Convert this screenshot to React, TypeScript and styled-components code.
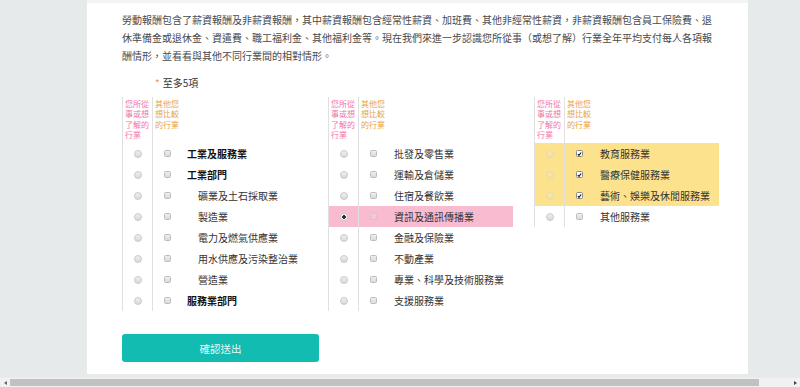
import React from 'react'
import styled, { createGlobalStyle, css } from 'styled-components'

const GlobalStyle = createGlobalStyle`
  html, body {
    margin: 0;
    padding: 0;
    overflow: hidden;
  }
  body {
    font-family: "Noto Sans CJK TC", "Noto Sans", sans-serif;
  }
`

type Item = {
  label: string,
  level?: 'bold' | 'indent' | 'plain',
  tone?: 'pink' | 'yellow',
  radio?: boolean,
  check?: boolean,
}

const groups: Item[][] = [
  [
    { label: '工業及服務業', level: 'bold' },
    { label: '工業部門', level: 'bold' },
    { label: '礦業及土石採取業', level: 'indent' },
    { label: '製造業', level: 'indent' },
    { label: '電力及燃氣供應業', level: 'indent' },
    { label: '用水供應及污染整治業', level: 'indent' },
    { label: '營造業', level: 'indent' },
    { label: '服務業部門', level: 'bold' },
  ],
  [
    { label: '批發及零售業' },
    { label: '運輸及倉儲業' },
    { label: '住宿及餐飲業' },
    { label: '資訊及通訊傳播業', tone: 'pink', radio: true },
    { label: '金融及保險業' },
    { label: '不動產業' },
    { label: '專業、科學及技術服務業' },
    { label: '支援服務業' },
  ],
  [
    { label: '教育服務業', tone: 'yellow', check: true },
    { label: '醫療保健服務業', tone: 'yellow', check: true },
    { label: '藝術、娛樂及休閒服務業', tone: 'yellow', check: true },
    { label: '其他服務業' },
  ],
]

const Page = styled.div`
  height: 100vh;
  display: flex;
  flex-direction: column;
  background: #e7eaeb;
`

const Main = styled.div`
  flex: 1;
  display: flex;
  padding-left: 87px;
  overflow: hidden;
`

const Panel = styled.div`
  width: 661px;
  box-sizing: border-box;
  margin-bottom: 3px;
  background: #fff;
  border-top: 3px solid #f2f3f3;
  padding: 8px 30px 0 35px;
`

const Intro = styled.p`
  margin: 0;
  font-size: 10px;
  line-height: 18px;
  color: #4a4a4a;
  white-space: nowrap;
`

const Note = styled.div`
  margin: 9px 0 5px 33px;
  font-size: 10px;
  line-height: 18px;
  color: #333;

  & span {
    color: #f0963c;
    margin-right: 3px;
  }
`

const Groups = styled.div`
  display: grid;
  grid-template-columns: repeat(3, 185px);
  column-gap: 21px;
  align-items: start;
`

const Row = styled.div<{ $tone?: 'pink' | 'yellow' }>`
  display: grid;
  grid-template-columns: 30px 30px 1fr;
  height: 21px;
  background: ${({ $tone }) =>
    $tone === 'pink' ? '#f8bbd0' : $tone === 'yellow' ? '#fde28d' : 'transparent'};
`

const HeadRow = styled(Row)`
  height: 46px;
`

const Cell = styled.div`
  border-left: 1px solid #e0e0e0;
  display: flex;
  align-items: center;
  justify-content: center;
`

const HeadCell = styled.div<{ $color: string }>`
  border-left: 1px solid #e0e0e0;
  padding: 2px 0 0 2px;
  font-size: 8px;
  line-height: 10.4px;
  color: ${({ $color }) => $color};

  & span {
    display: block;
    white-space: nowrap;
  }
`

const Label = styled.div<{ $level?: 'bold' | 'indent' | 'plain' }>`
  display: flex;
  align-items: center;
  padding-left: ${({ $level }) => ($level === 'indent' ? '16px' : $level === 'bold' ? '5px' : '6px')};
  font-size: 10px;
  white-space: nowrap;
  color: #333;
  ${({ $level }) =>
    $level === 'bold' &&
    css`
      font-weight: 700;
      color: #111;
    `}
`

const Radio = styled.span<{ $on?: boolean, $off?: boolean }>`
  width: 8px;
  height: 8px;
  border-radius: 50%;
  border: 1px solid #c9c9c9;
  box-sizing: border-box;
  background: ${({ $on }) =>
    $on ? 'radial-gradient(circle, #333 0 1.6px, #f7f7f7 2.1px)' : 'linear-gradient(#f0f0f0, #d8d8d8)'};
  opacity: ${({ $off }) => ($off ? 0.35 : 1)};
`

const Box = styled.span<{ $on?: boolean, $off?: boolean }>`
  width: 7px;
  height: 7px;
  box-sizing: border-box;
  border-radius: 1.5px;
  border: 1px solid ${({ $on }) => ($on ? '#8a8a8a' : '#bcbcbc')};
  background: ${({ $on }) => ($on ? '#fff' : 'linear-gradient(#eee, #dadada)')};
  opacity: ${({ $off }) => ($off ? 0.35 : 1)};
  display: flex;
  align-items: center;
  justify-content: center;
`

const Submit = styled.button`
  margin-top: 23px;
  width: 197px;
  height: 28px;
  border: none;
  border-radius: 3px;
  background: #12bcb0;
  color: #e8f8f6;
  font-family: inherit;
  font-size: 10.5px;
`

const Scrollbar = styled.div`
  height: 10px;
  display: flex;
  align-items: center;
  background: #f1f1f1;
  border-top: 1px solid #ebebeb;
  box-sizing: border-box;
`

const Arrow = styled.span<{ $dir: 'left' | 'right' }>`
  width: 10px;
  display: flex;
  justify-content: center;

  &::before {
    content: '';
    border-top: 2px solid transparent;
    border-bottom: 2px solid transparent;
    ${({ $dir }) =>
      $dir === 'left' ? 'border-right: 3px solid #666;' : 'border-left: 3px solid #444;'}
  }
`

const Thumb = styled.div`
  flex: 1;
  height: 7px;
  margin-right: 31px;
  background: #c1c1c1;
`

const Tick = () => (
  <svg width="6" height="6" viewBox="0 0 6 6">
    <path d="M1 3.2 L2.4 4.6 L5 1.2" fill="none" stroke="#111" strokeWidth="1.3" />
  </svg>
)

const Group = ({ items }: { items: Item[] }) => (
  <div>
    <HeadRow>
      <HeadCell $color="#f274ac">
        <span>您所從</span>
        <span>事或想</span>
        <span>了解的</span>
        <span>行業</span>
      </HeadCell>
      <HeadCell $color="#e8a23c">
        <span>其他您</span>
        <span>想比較</span>
        <span>的行業</span>
      </HeadCell>
      <div />
    </HeadRow>
    {items.map((it) => (
      <Row key={it.label} $tone={it.tone}>
        <Cell>
          <Radio $on={it.radio} $off={it.tone === 'yellow'} />
        </Cell>
        <Cell>
          <Box $on={it.check} $off={it.tone === 'pink'}>
            {it.check && <Tick />}
          </Box>
        </Cell>
        <Label $level={it.level}>{it.label}</Label>
      </Row>
    ))}
  </div>
)

export default function App() {
  return (
    <Page>
      <GlobalStyle />
      <Main>
        <Panel>
          <Intro>
            勞動報酬包含了薪資報酬及非薪資報酬，其中薪資報酬包含經常性薪資、加班費、其他非經常性薪資，非薪資報酬包含員工保險費、退
            <br />
            休準備金或退休金、資遣費、職工福利金、其他福利金等。現在我們來進一步認識您所從事（或想了解）行業全年平均支付每人各項報
            <br />
            酬情形，並看看與其他不同行業間的相對情形。
          </Intro>
          <Note>
            <span>*</span>至多5項
          </Note>
          <Groups>
            {groups.map((g, i) => (
              <Group key={i} items={g} />
            ))}
          </Groups>
          <Submit>確認送出</Submit>
        </Panel>
      </Main>
      <Scrollbar>
        <Arrow $dir="left" />
        <Thumb />
        <Arrow $dir="right" />
      </Scrollbar>
    </Page>
  )
}
